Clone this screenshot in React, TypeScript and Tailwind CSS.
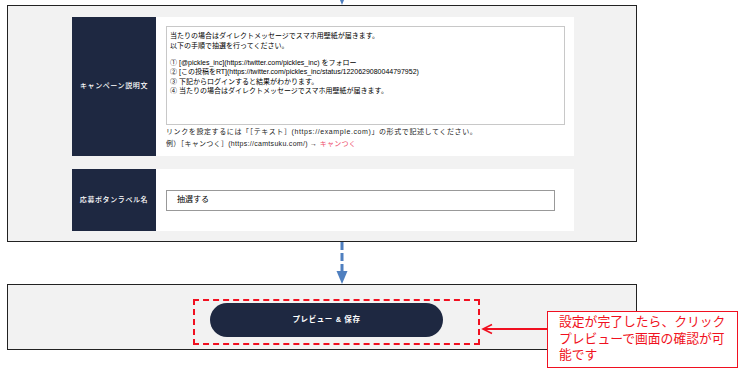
import React from 'react'

const jp = "font-['Liberation_Sans','Noto_Sans_CJK_JP',sans-serif]"

const descLines = [
  '当たりの場合はダイレクトメッセージでスマホ用壁紙が届きます。',
  '以下の手順で抽選を行ってください。',
  '',
  '① [@pickles_inc](https://twitter.com/pickles_inc) をフォロー',
  '② [この投稿をRT](https://twitter.com/pickles_inc/status/1220629080044797952)',
  '③ 下記からログインすると結果がわかります。',
  '④ 当たりの場合はダイレクトメッセージでスマホ用壁紙が届きます。',
]

function DashedDownArrow() {
  return (
    <svg width="14" height="42" viewBox="0 0 14 42" className="block">
      <line x1="7" y1="0" x2="7" y2="30" stroke="#4f7fbf" strokeWidth="3" strokeDasharray="8 3" />
      <polygon points="1.5,29 12.5,29 7,42" fill="#4f7fbf" />
    </svg>
  )
}

function Label({ children }: { children: React.ReactNode }) {
  return (
    <div className="w-[84px] shrink-0 bg-[#1e2841] flex items-center justify-center text-white text-[7px] tracking-[0.6px] font-medium">
      {children}
    </div>
  )
}

export default function App() {
  return (
    <div className={`w-[752px] h-[390px] bg-white overflow-hidden ${jp}`}>
      {/* tip of arrow coming from above */}
      <div className="ml-[335px] h-[5px]">
        <svg width="14" height="5" viewBox="0 0 14 5" className="block">
          <polygon points="5,0 9,0 7,5" fill="#4f7fbf" />
        </svg>
      </div>

      {/* settings panel */}
      <div className="ml-[7px] w-[630px] border border-[#222] bg-[#f2f2f2] pt-[11px] pb-[10px] pl-[64px]">
        <div className="flex w-[502px] h-[139px] bg-white">
          <Label>キャンペーン説明文</Label>
          <div className="pl-[10px] pt-[9px]">
            <div className="w-[399px] h-[99px] border border-[#c8c8c8] pl-[3px] pt-[4px] text-[7px] leading-[9.5px] text-black">
              {descLines.map((l, i) =>
                l === '' ? <div key={i} className="h-[7.5px]" /> : <div key={i} className="whitespace-nowrap">{l}</div>
              )}
            </div>
            <div className="mt-[1px] text-[7px] leading-[11.5px] text-[#222] whitespace-nowrap">
              <div className="tracking-[0.6px]">リンクを設定するには「［テキスト］(https://example.com)」の形式で記述してください。</div>
              <div className="tracking-[0.3px]">
                例）［キャンつく］(https://camtsuku.com/) → <span className="text-[#ee4d6a]">キャンつく</span>
              </div>
            </div>
          </div>
        </div>

        <div className="mt-[13px] flex w-[502px] h-[62px] bg-white">
          <Label>応募ボタンラベル名</Label>
          <div className="pl-[10px] flex items-center">
            <div className="w-[389px] h-[21px] border border-[#999] flex items-center pl-[10px] text-[8px] text-black">
              抽選する
            </div>
          </div>
        </div>
      </div>

      <div className="ml-[335px] h-[42px]">
        <DashedDownArrow />
      </div>

      {/* preview panel */}
      <div className="relative">
        <div className="ml-[7px] w-[630px] h-[66px] border border-[#222] bg-[#f2f2f2] pt-[14px] pl-[185px]">
          <div className="w-[287px] h-[46px] border-2 border-dashed border-[#f01020] pl-[15px] pt-[2px]">
            <button className="w-[233px] h-[34px] rounded-full bg-[#1e2841] text-white text-[7.5px] font-bold tracking-[0.6px]">
              プレビュー &amp; 保存
            </button>
          </div>
        </div>

        {/* annotation */}
        <svg width="70" height="12" viewBox="0 0 70 12" className="absolute left-[480px] top-[39px]">
          <line x1="3" y1="6" x2="67" y2="6" stroke="#f01020" strokeWidth="2" />
          <polyline points="12,1.5 3,6 12,10.5" fill="none" stroke="#f01020" strokeWidth="1.6" />
        </svg>
        <div className="absolute left-[547px] top-[27px] w-[191px] h-[57px] border border-[#f01020] bg-white pl-[11px] pt-[2px] text-[12.8px] leading-[16.5px] text-[#f01020] whitespace-nowrap">
          設定が完了したら、クリック<br />
          プレビューで画面の確認が可<br />
          能です
        </div>
      </div>
    </div>
  )
}
